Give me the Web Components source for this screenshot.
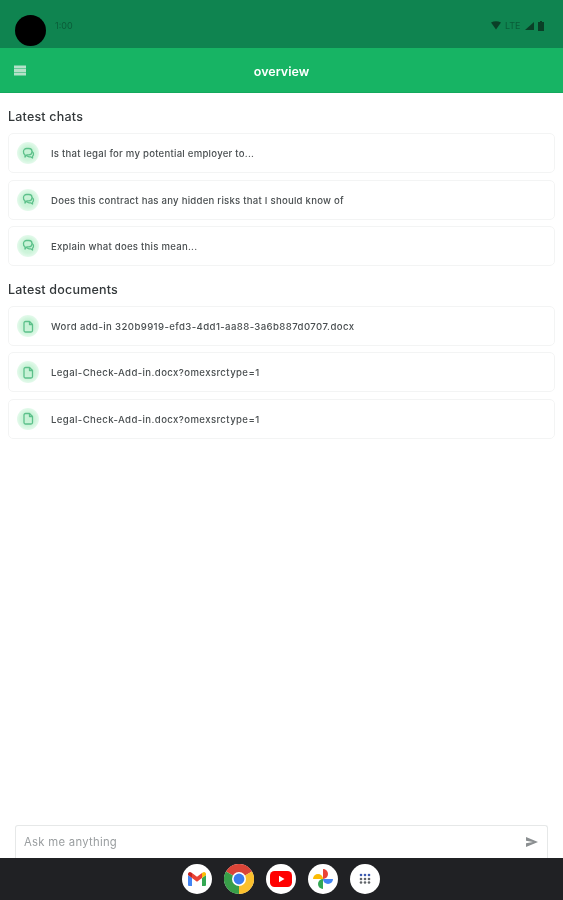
<!DOCTYPE html>
<html>
<head>
<meta charset="utf-8">
<title>overview</title>
<style>
  html, body { margin: 0; height: 100%; background: #fff; font-family: Inter, "Noto Sans", sans-serif; }
</style>
</head>
<body>
<app-screen>
  <status-bar></status-bar>
  <app-header title="overview"></app-header>
  <main-list>
    <section-list heading="Latest chats">
      <list-card icon="chat">Is that legal for my potential employer to...</list-card>
      <list-card icon="chat">Does this contract has any hidden risks that I should know of</list-card>
      <list-card icon="chat">Explain what does this mean...</list-card>
    </section-list>
    <section-list heading="Latest documents">
      <list-card icon="doc">Word add-in 320b9919-efd3-4dd1-aa88-3a6b887d0707.docx</list-card>
      <list-card icon="doc">Legal-Check-Add-in.docx?omexsrctype=1</list-card>
      <list-card icon="doc">Legal-Check-Add-in.docx?omexsrctype=1</list-card>
    </section-list>
  </main-list>
  <ask-box placeholder="Ask me anything"></ask-box>
  <app-dock></app-dock>
</app-screen>

<script>
class AppScreen extends HTMLElement {
  constructor() {
    super();
    this.attachShadow({ mode: "open" });
    this.shadowRoot.innerHTML = `
      <style>
        :host { display: flex; flex-direction: column; height: 900px; overflow: hidden; }
      </style>
      <slot></slot>`;
  }
}

class StatusBar extends HTMLElement {
  constructor() {
    super();
    this.attachShadow({ mode: "open" });
    this.shadowRoot.innerHTML = `
      <style>
        :host { display: flex; align-items: flex-start; height: 48px; flex: none; background: #0f8450; color: #0a5c38; font-size: 9px; filter: blur(.5px); }
        .camera { width: 31px; height: 31px; border-radius: 50%; background: #000; margin: 15px 9px 0 15px; flex: none; }
        .time { margin-top: 20px; }
        .right { margin: 20px 19px 0 auto; display: flex; align-items: center; gap: 4.250px; height: 11px; }
        svg { display: block; fill: #0a3f27; }
      </style>
      <div class="camera"></div>
      <div class="time">1:00</div>
      <div class="right">
        <svg width="10" height="9" viewBox="0 0 10 9"><path d="M0 1.500Q5-1 10 1.500L5 8.500Z"/></svg>
        <span>LTE</span>
        <svg width="9" height="8" viewBox="0 0 9 8"><path d="M9 0V8H0Z"/></svg>
        <svg width="6" height="10" viewBox="0 0 6 10"><path d="M2 0H4V1H6V10H0V1H2Z"/></svg>
      </div>`;
  }
}

class AppHeader extends HTMLElement {
  constructor() {
    super();
    this.attachShadow({ mode: "open" });
    const title = this.getAttribute("title") || "";
    this.shadowRoot.innerHTML = `
      <style>
        :host { display: flex; align-items: center; height: 45px; flex: none; background: #17b464; color: #fff; box-sizing: border-box; border-bottom: 1px solid #14a95d; }
        svg { display: block; margin-left: 14px; flex: none; filter: blur(.4px); }
        h1 { flex: 1; margin: 2px 26px 0 0; text-align: center; font-size: 12.500px; font-weight: 600; filter: blur(.3px); }
      </style>
      <svg width="12" height="11" viewBox="0 0 12 11" fill="#b4e2c9">
        <rect y="0.500" width="12" height="3"/><rect y="4" width="12" height="3"/><rect y="7.500" width="12" height="3"/>
      </svg>
      <h1>${title}</h1>`;
  }
}

class MainList extends HTMLElement {
  constructor() {
    super();
    this.attachShadow({ mode: "open" });
    this.shadowRoot.innerHTML = `
      <style>
        :host { display: flex; flex-direction: column; flex: 1; min-height: 0; gap: 15px; padding: 15px 8px 0 8px; filter: blur(.5px); }
      </style>
      <slot></slot>`;
  }
}

class SectionList extends HTMLElement {
  constructor() {
    super();
    this.attachShadow({ mode: "open" });
    const heading = this.getAttribute("heading") || "";
    this.shadowRoot.innerHTML = `
      <style>
        :host { display: flex; flex-direction: column; gap: 6.300px; }
        h2 { margin: 0 0 1px; font-size: 12.500px; line-height: 18px; font-weight: 500; letter-spacing: .2px; color: #33383a; }
      </style>
      <h2>${heading}</h2>
      <slot></slot>`;
  }
}

const CARD_ICONS = {
  chat: `<path d="M5.500 2.500h2.500a3 3 0 0 1 3 3v.3a3 3 0 0 1-3 3H5.800L4 11V8.800A3 3 0 0 1 2.500 5.800v-.3a3 3 0 0 1 3-3Z"/><path d="M11 5.500a2.800 2.800 0 0 1 1.500 2.500 2.800 2.800 0 0 1-1 2.200V12L9.500 10.800H8a3 3 0 0 1-2.500-1.500"/>`,
  doc: `<path d="M4.500 2.500h4L11.500 5.500v6a1.500 1.500 0 0 1-1.500 1.500H4.500A1.500 1.500 0 0 1 3 11.500v-7.500a1.500 1.500 0 0 1 1.500-1.500Z"/><path d="M8.500 2.500v3h3"/>`,
};

class ListCard extends HTMLElement {
  constructor() {
    super();
    this.attachShadow({ mode: "open" });
    const kind = this.getAttribute("icon");
    const icon = CARD_ICONS[kind] || "";
    this.shadowRoot.innerHTML = `
      <style>
        :host { display: flex; align-items: center; height: 40px; box-sizing: border-box; padding-left: 8px; border: 1px solid #f3f4f4; border-radius: 5px; background: #fff; }
        .badge { width: 22px; height: 22px; border-radius: 50%; background: radial-gradient(circle, #c4f1d3 0%, #cdf4da 45%, #e6faed 72%, #fff 100%); display: flex; align-items: center; justify-content: center; flex: none; margin-right: 12px; }
        svg { display: block; fill: none; stroke: #5cc08a; stroke-width: 1.300; stroke-linejoin: round; }
        .text { margin-top: 1px; font-size: 9.600px; font-weight: 500; letter-spacing: ${kind === "doc" ? ".39px" : ".24px"}; color: #4a4f51; white-space: nowrap; }
      </style>
      <div class="badge"><svg width="15" height="15" viewBox="0 0 15 15">${icon}</svg></div>
      <div class="text"><slot></slot></div>`;
  }
}

class AskBox extends HTMLElement {
  constructor() {
    super();
    this.attachShadow({ mode: "open" });
    const placeholder = this.getAttribute("placeholder") || "";
    this.shadowRoot.innerHTML = `
      <style>
        :host { display: flex; align-items: center; flex: none; height: 33px; box-sizing: border-box; margin: 0 15px; padding: 0 9px 0 8px; border: 1px solid #e6e8e8; border-bottom: 0; border-radius: 3px 3px 0 0; filter: blur(.4px); }
        .hint { flex: 1; font-size: 11.300px; letter-spacing: .28px; color: #9a9ea0; }
        svg { display: block; fill: #8b8f91; }
      </style>
      <div class="hint">${placeholder}</div>
      <svg width="12" height="10" viewBox="0 0 12 10"><path d="M0 0L12 5L0 10L0 6.200L7 5L0 3.800Z"/></svg>`;
  }
}

class AppDock extends HTMLElement {
  constructor() {
    super();
    this.attachShadow({ mode: "open" });
    this.shadowRoot.innerHTML = `
      <style>
        :host { display: flex; justify-content: center; align-items: center; gap: 12px; flex: none; height: 42px; box-sizing: border-box; padding-right: 1px; background: #202124; }
        .app { width: 30px; height: 30px; border-radius: 50%; background: #fff; display: flex; align-items: center; justify-content: center; filter: blur(.3px); }
        svg { display: block; }
      </style>
      <div class="app"><svg width="20" height="16" viewBox="0 0 20 16">
        <path d="M1 4V14a1 1 0 0 0 1 1H5V7Z" fill="#4285f4"/>
        <path d="M19 4V14a1 1 0 0 1-1 1H15V7Z" fill="#34a853"/>
        <path d="M1 4V3a2 2 0 0 1 3.200-1.600L5 2V7Z" fill="#c5221f"/>
        <path d="M15 7V2l.8-.6A2 2 0 0 1 19 3v1Z" fill="#fbbc04"/>
        <path d="M5 2L10 5.800 15 2V7L10 10.800 5 7Z" fill="#ea4335"/>
      </svg></div>
      <div class="app"><svg width="30" height="30" viewBox="0 0 30 30">
        <path d="M15 15L2 7.500A15 15 0 0 1 28 7.500Z" fill="#db4437"/>
        <path d="M15 15L28 7.500A15 15 0 0 1 15 30Z" fill="#fbc02d"/>
        <path d="M15 15L15 30A15 15 0 0 1 2 7.500Z" fill="#389e48"/>
        <circle cx="15" cy="15" r="7" fill="#fff"/><circle cx="15" cy="15" r="5.400" fill="#3b7ded"/>
      </svg></div>
      <div class="app"><svg width="22" height="16" viewBox="0 0 22 16">
        <rect width="22" height="16" rx="4.500" fill="#f00"/><path d="M9 4.800L14.500 8 9 11.200Z" fill="#fff"/>
      </svg></div>
      <div class="app"><svg width="22" height="22" viewBox="0 0 22 22">
        <path d="M1 11A5 5 0 0 1 11 11Z" fill="#fbbc04"/>
        <path d="M11 1A5 5 0 0 1 11 11Z" fill="#ea4335"/>
        <path d="M21 11A5 5 0 0 1 11 11Z" fill="#4285f4"/>
        <path d="M11 21A5 5 0 0 1 11 11Z" fill="#34a853"/>
      </svg></div>
      <div class="app"><svg width="16" height="12" viewBox="0 0 16 12">
        <g fill="#3c5ab0"><circle cx="4" cy="2" r="1.300"/><circle cx="8" cy="2" r="1.300"/><circle cx="12" cy="2" r="1.300"/></g>
        <g fill="#5f6368"><circle cx="4" cy="6" r="1.300"/><circle cx="8" cy="6" r="1.300"/><circle cx="12" cy="6" r="1.300"/>
        <circle cx="4" cy="9.500" r="1.300"/><circle cx="8" cy="9.500" r="1.300"/><circle cx="12" cy="9.500" r="1.300"/></g>
      </svg></div>`;
  }
}

customElements.define("app-screen", AppScreen);
customElements.define("status-bar", StatusBar);
customElements.define("app-header", AppHeader);
customElements.define("main-list", MainList);
customElements.define("section-list", SectionList);
customElements.define("list-card", ListCard);
customElements.define("ask-box", AskBox);
customElements.define("app-dock", AppDock);
</script>
</body>
</html>
